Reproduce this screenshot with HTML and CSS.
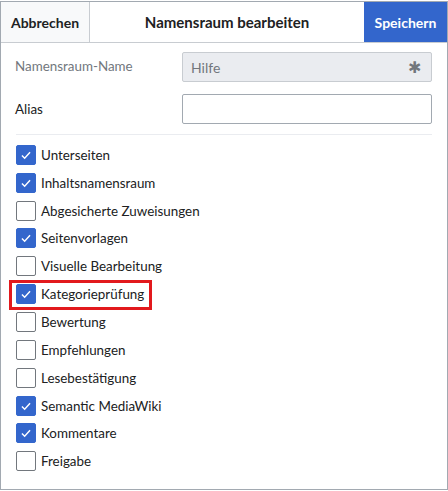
FILE: index.html
```
<!DOCTYPE html>
<html lang="de">
<head>
<meta charset="utf-8">
<title>Namensraum bearbeiten</title>
<link rel="stylesheet" href="styles.css">
</head>
<body>
<div class="dialog">
  <div class="head">
    <button class="btn cancel">Abbrechen</button>
    <div class="title">Namensraum bearbeiten</div>
    <button class="btn save">Speichern</button>
  </div>
  <div class="body">
    <div class="field">
      <label class="lbl disabled">Namensraum-Name</label>
      <div class="input readonly"><span>Hilfe</span><span class="star">✱</span></div>
    </div>
    <div class="field">
      <label class="lbl">Alias</label>
      <div class="input"></div>
    </div>
    <div class="sep"></div>
    <ul class="checks">
      <li class="item"><span class="box on"><svg viewBox="0 0 20 20"><polyline points="5.5,10.5 8.5,13.5 14.5,7"/></svg></span>Unterseiten</li>
      <li class="item"><span class="box on"><svg viewBox="0 0 20 20"><polyline points="5.5,10.5 8.5,13.5 14.5,7"/></svg></span>Inhaltsnamensraum</li>
      <li class="item"><span class="box"></span>Abgesicherte Zuweisungen</li>
      <li class="item"><span class="box on"><svg viewBox="0 0 20 20"><polyline points="5.5,10.5 8.5,13.5 14.5,7"/></svg></span>Seitenvorlagen</li>
      <li class="item"><span class="box"></span>Visuelle Bearbeitung</li>
      <li class="item mark"><span class="box on"><svg viewBox="0 0 20 20"><polyline points="5.5,10.5 8.5,13.5 14.5,7"/></svg></span>Kategorieprüfung</li>
      <li class="item"><span class="box"></span>Bewertung</li>
      <li class="item"><span class="box"></span>Empfehlungen</li>
      <li class="item"><span class="box"></span>Lesebestätigung</li>
      <li class="item"><span class="box on"><svg viewBox="0 0 20 20"><polyline points="5.5,10.5 8.5,13.5 14.5,7"/></svg></span>Semantic MediaWiki</li>
      <li class="item"><span class="box on"><svg viewBox="0 0 20 20"><polyline points="5.5,10.5 8.5,13.5 14.5,7"/></svg></span>Kommentare</li>
      <li class="item"><span class="box"></span>Freigabe</li>
    </ul>
  </div>
</div>
</body>
</html>
```
FILE: styles.css
```
html, body {
  margin: 0;
  padding: 0;
  background: #ffffff;
}
body {
  font-family: Lato, "Noto Sans", sans-serif;
  color: #202122;
  font-size: 13.4px;
}
.dialog {
  margin-top: 1px;
  width: 446px;
  height: 487px;
  border: 1px solid #a2a9b1;
  background: #fff;
  display: flex;
  flex-direction: column;
}
.head {
  display: flex;
  height: 40px;
  border-bottom: 1px solid #c8ccd1;
}
.btn {
  font-family: inherit;
  font-weight: bold;
  font-size: 14px;
  border: 0;
  margin: 0;
  padding: 0;
}
.cancel {
  width: 89px;
  background: #f8f9fa;
  color: #202122;
  border-right: 1px solid #c8ccd1;
}
.title {
  flex: 1;
  display: flex;
  align-items: center;
  justify-content: center;
  font-weight: bold;
  font-size: 15px;
}
.save {
  width: 83px;
  background: #3366cc;
  color: #fff;
}
.body {
  padding: 9px 15px 0 14px;
}
.field {
  display: flex;
  align-items: center;
  margin-bottom: 12px;
}
.lbl {
  width: 167px;
}
.lbl.disabled {
  color: #72777d;
  margin-top: -3px;
}
.input {
  flex: 1;
  height: 28px;
  border: 1px solid #a2a9b1;
  border-radius: 2px;
  display: flex;
  align-items: center;
  justify-content: space-between;
  padding: 0 10px 0 8px;
  box-sizing: content-box;
  font-size: 14px;
}
.input.readonly {
  background: #eaecf0;
  border-color: #c8ccd1;
  color: #72777d;
}
.star {
  font-size: 16px;
  color: #72777d;
}
.sep {
  height: 1px;
  background: #eaecf0;
  margin-top: -2px;
  margin-left: 1px;
}
.checks {
  list-style: none;
  margin: 6px 0 0 0;
  padding: 0;
}
.item {
  display: flex;
  align-items: center;
  gap: 5px;
  height: 27.85px;
  position: relative;
  width: max-content;
}
.box {
  width: 18px;
  height: 18px;
  border: 1px solid #72777d;
  border-radius: 2px;
  display: flex;
  align-items: center;
  justify-content: center;
  margin-left: 1px;
}
.box.on {
  background: #3366cc;
  border-color: #3366cc;
}
.box svg {
  width: 20px;
  height: 20px;
}
.box polyline {
  fill: none;
  stroke: #ffffff;
  stroke-width: 1.6;
}
.mark::after {
  content: "";
  position: absolute;
  left: -6px;
  right: -8px;
  top: 0px;
  bottom: -2px;
  border: 3px solid #e2191d;
}
```
